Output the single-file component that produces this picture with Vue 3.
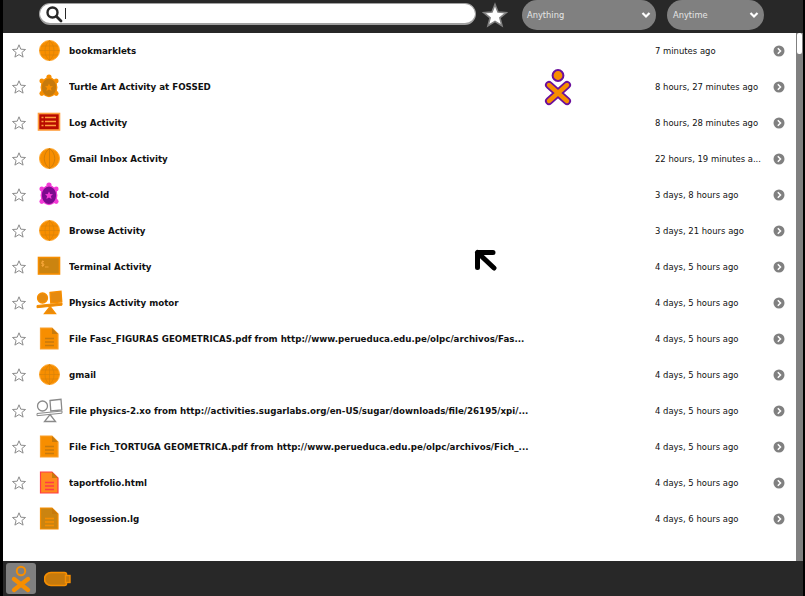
<script setup>
const rows = [
  { icon: 'globe', fill: '#f78e00', stroke: '#ffa62b', title: 'bookmarklets', time: '7 minutes ago' },
  { icon: 'turtle', fill: '#c77a0c', stroke: '#f78e00', title: 'Turtle Art Activity at FOSSED', time: '8 hours, 27 minutes ago' },
  { icon: 'log', fill: '#b80a00', stroke: '#ff9e3d', title: 'Log Activity', time: '8 hours, 28 minutes ago' },
  { icon: 'melon', fill: '#f78e00', stroke: '#c77a0c', title: 'Gmail Inbox Activity', time: '22 hours, 19 minutes a...' },
  { icon: 'turtle', fill: '#7b0a8e', stroke: '#f33ad6', title: 'hot-cold', time: '3 days, 8 hours ago' },
  { icon: 'globe', fill: '#f78e00', stroke: '#ffa62b', title: 'Browse Activity', time: '3 days, 21 hours ago' },
  { icon: 'terminal', fill: '#cb8410', stroke: '#f78e00', title: 'Terminal Activity', time: '4 days, 5 hours ago' },
  { icon: 'physics', fill: '#e58a0f', stroke: '#f78e00', title: 'Physics Activity motor', time: '4 days, 5 hours ago' },
  { icon: 'doc', fill: '#f78e00', stroke: '#f9a02c', line: '#c77a0c', title: 'File Fasc_FIGURAS GEOMETRICAS.pdf from http://www.perueduca.edu.pe/olpc/archivos/Fas...', time: '4 days, 5 hours ago' },
  { icon: 'globe', fill: '#f78e00', stroke: '#ffa62b', title: 'gmail', time: '4 days, 5 hours ago' },
  { icon: 'physics', fill: '#ffffff', stroke: '#8a8a8a', title: 'File physics-2.xo from http://activities.sugarlabs.org/en-US/sugar/downloads/file/26195/xpi/...', time: '4 days, 5 hours ago' },
  { icon: 'doc', fill: '#f78e00', stroke: '#f9a02c', line: '#c77a0c', title: 'File Fich_TORTUGA GEOMETRICA.pdf from http://www.perueduca.edu.pe/olpc/archivos/Fich_...', time: '4 days, 5 hours ago' },
  { icon: 'doc', fill: '#ff8a1e', stroke: '#ff3b47', line: '#ff3b47', title: 'taportfolio.html', time: '4 days, 5 hours ago' },
  { icon: 'doc', fill: '#cb8410', stroke: '#f78e00', line: '#f78e00', title: 'logosession.lg', time: '4 days, 6 hours ago' },
]
</script>

<template>
  <div class="journal">
    <header class="toolbar">
      <div class="search">
        <svg class="lens" width="18" height="18" viewBox="0 0 18 18">
          <circle cx="7.5" cy="7.5" r="5" fill="none" stroke="#282828" stroke-width="2.4" />
          <path d="M11.5 11.5L16 16" stroke="#282828" stroke-width="2.8" stroke-linecap="round" />
        </svg>
        <span class="caret"></span>
      </div>
      <svg class="fav" width="26" height="26" viewBox="0 0 26 26">
        <path d="M13 2.5l3 7.6 8.2.5-6.3 5.2 2.1 8-7-4.4-7 4.4 2.1-8-6.3-5.2 8.2-.5z" fill="#fff" stroke="#808080" stroke-width="1.6" />
      </svg>
      <div class="combo anything">
        <span>Anything</span>
        <svg width="10" height="8" viewBox="0 0 10 8"><path d="M1.5 2l3.5 3.5L8.5 2" fill="none" stroke="#fff" stroke-width="2.2" /></svg>
      </div>
      <div class="combo anytime">
        <span>Anytime</span>
        <svg width="10" height="8" viewBox="0 0 10 8"><path d="M1.5 2l3.5 3.5L8.5 2" fill="none" stroke="#fff" stroke-width="2.2" /></svg>
      </div>
    </header>

    <main class="middle">
      <div class="list">
        <div v-for="row in rows" :key="row.title" class="row">
          <svg class="star" width="16" height="16" viewBox="0 0 16 16">
            <path d="M8 1.8l1.8 4.4 4.7.3-3.6 3 1.2 4.6L8 11.6l-4.1 2.5 1.2-4.6-3.6-3 4.7-.3z" fill="#fff" stroke="#8c8c8c" stroke-width="1" />
          </svg>
          <svg class="icon" width="28" height="28" viewBox="0 0 28 28">
            <g v-if="row.icon === 'globe'">
              <circle cx="14.5" cy="13.5" r="10" :fill="row.fill" :stroke="row.stroke" stroke-width="1" />
              <path d="M4.5 13.5h20M6 9h17M6 18h17M14.5 3.5v20M14.5 3.5c-6 5-6 15 0 20M14.5 3.5c6 5 6 15 0 20" fill="none" stroke="#d98208" stroke-width="0.7" />
            </g>
            <g v-else-if="row.icon === 'melon'">
              <circle cx="14.5" cy="13.5" r="10" :fill="row.fill" stroke="#ffa62b" stroke-width="1" />
              <path d="M14.5 3.5v20M14.5 3.5c-7 5-7 15 0 20M14.5 3.5c7 5 7 15 0 20" fill="none" :stroke="row.stroke" stroke-width="0.8" />
            </g>
            <g v-else-if="row.icon === 'turtle'">
              <circle cx="14" cy="4" r="2.6" :fill="row.stroke" />
              <circle cx="6.8" cy="8" r="2.4" :fill="row.stroke" />
              <circle cx="21.2" cy="8" r="2.4" :fill="row.stroke" />
              <circle cx="6.8" cy="20.5" r="2.4" :fill="row.stroke" />
              <circle cx="21.2" cy="20.5" r="2.4" :fill="row.stroke" />
              <ellipse cx="14" cy="14.2" rx="7.8" ry="9.4" :fill="row.fill" :stroke="row.stroke" stroke-width="1.3" />
              <path d="M14 10.5l1.2 2.6 2.8.2-2.1 1.8.7 2.8-2.6-1.5-2.6 1.5.7-2.8-2.1-1.8 2.8-.2z" :fill="row.stroke" />
            </g>
            <g v-else-if="row.icon === 'log'">
              <rect x="3.5" y="4.5" width="21" height="16.5" :fill="row.fill" :stroke="row.stroke" stroke-width="1.6" />
              <path d="M10 8.5h11M10 12.5h11M10 16.5h11M6.5 8.5h2M6.5 12.5h2M6.5 16.5h2" stroke="#ff9e3d" stroke-width="1.4" />
            </g>
            <g v-else-if="row.icon === 'terminal'">
              <rect x="3.5" y="4.5" width="21" height="16.5" :fill="row.fill" :stroke="row.stroke" stroke-width="1.6" />
              <path d="M6.5 12.5h2.5M9 8.5H7l-.5 2 2.5.5-.5 1.5M7.7 7.5v6.5M10 14h3.5" fill="none" stroke="#f7a63a" stroke-width="0.9" />
            </g>
            <g v-else-if="row.icon === 'physics'">
              <circle cx="7.5" cy="9" r="5" :fill="row.fill" :stroke="row.stroke" stroke-width="1.3" />
              <path d="M15 3.5l11-1.2.8 10.5-11 1.2z" :fill="row.fill" :stroke="row.stroke" stroke-width="1.3" />
              <path d="M2 16.5l25-2.5v2.2l-25 2.5z" :fill="row.fill" :stroke="row.stroke" stroke-width="1" />
              <path d="M15 17.5l5.5 7H9.5z" :fill="row.fill" :stroke="row.stroke" stroke-width="1.3" />
            </g>
            <g v-else>
              <path d="M5.5 3h11.5l6 6v15H5.5z" :fill="row.fill" :stroke="row.stroke" stroke-width="1.2" />
              <path d="M17 3v6h6z" fill="#c77a0c" />
              <path d="M10 13.5h9M10 17h9M10 20.5h9" :stroke="row.line" stroke-width="1.4" />
            </g>
          </svg>
          <span class="title">{{ row.title }}</span>
          <span class="time">{{ row.time }}</span>
          <svg class="go" width="12" height="12" viewBox="0 0 12 12">
            <circle cx="6" cy="6" r="5.5" fill="#808080" />
            <path d="M4.8 3.3L7.5 6 4.8 8.7" fill="none" stroke="#fff" stroke-width="1.5" />
          </svg>
        </div>
      </div>
      <div class="scrollbar"><div class="thumb"></div></div>

      <svg class="xo-pointer" width="28" height="38" viewBox="0 0 28 38">
        <path d="M5 17l18 16M23 17L5 33" stroke="#6a0f9c" stroke-width="8" stroke-linecap="round" />
        <path d="M5 17l18 16M23 17L5 33" stroke="#f78e00" stroke-width="4.4" stroke-linecap="round" />
        <circle cx="14" cy="7.5" r="5.4" fill="#f78e00" stroke="#6a0f9c" stroke-width="2" />
      </svg>
      <svg class="cursor" width="24" height="24" viewBox="0 0 24 24">
        <path d="M4.5 4.5H20M4.5 4.5V19.5M4.5 4.5L21 20" fill="none" stroke="#000" stroke-width="5" stroke-linecap="round" />
      </svg>
    </main>

    <footer class="frame">
      <div class="device active">
        <svg width="28" height="30" viewBox="0 0 28 30">
          <path d="M7 15l14 11M21 15L7 26" stroke="#f78e00" stroke-width="4.4" stroke-linecap="round" />
          <circle cx="14" cy="7" r="4.2" fill="none" stroke="#f78e00" stroke-width="2" />
        </svg>
      </div>
      <svg class="usb" width="28" height="16" viewBox="0 0 28 16">
        <path d="M7 1.5h13.5a2 2 0 0 1 2 2v9a2 2 0 0 1-2 2H7a6.5 6.5 0 0 1 0-13z" fill="#c77a0c" stroke="#f78e00" stroke-width="1.6" />
        <rect x="21.5" y="4.5" width="4.5" height="7" fill="#c77a0c" stroke="#f78e00" stroke-width="1.4" />
      </svg>
    </footer>
  </div>
</template>

<style scoped>
.journal {
  width: 805px;
  height: 596px;
  box-sizing: border-box;
  padding: 0 2px 0 3px;
  display: flex;
  flex-direction: column;
  overflow: hidden;
  background: #000;
  font-family: "DejaVu Sans", sans-serif;
}
.toolbar {
  height: 33px;
  flex: none;
  display: flex;
  align-items: flex-start;
  padding-left: 36px;
  box-sizing: border-box;
  background: #282828;
}
.search {
  width: 437px;
  height: 22px;
  margin-top: 3px;
  box-sizing: border-box;
  display: flex;
  align-items: center;
  gap: 2px;
  padding-left: 5px;
  border-radius: 11px;
  background: #fff;
  border: 1px solid #a0a0a0;
  border-bottom-width: 2px;
}
.lens { flex: none; }
.caret {
  width: 1px;
  height: 11px;
  background: #282828;
}
.fav { margin: 2px 0 0 6px; }
.combo {
  height: 30px;
  margin: 0 0 0 14px;
  box-sizing: border-box;
  display: flex;
  align-items: center;
  justify-content: space-between;
  padding: 0 5px 0 5px;
  border-radius: 15px;
  background: #808080;
  color: #e6e6e6;
  font-size: 8.3px;
}
.combo svg { flex: none; }
.anything { width: 134px; }
.anytime { width: 97px; margin-left: 11px; padding-left: 6px; }
.middle {
  position: relative;
  flex: 1;
  min-height: 0;
  display: flex;
  background: #000;
}
.list {
  flex: 1;
  min-width: 0;
  background: #fff;
}
.row {
  height: 36px;
  display: flex;
  align-items: center;
  color: #111;
}
.star { flex: none; margin-left: 8px; }
.icon { flex: none; margin-left: 8px; }
.title {
  width: 586px;
  flex: none;
  margin-left: 6px;
  padding-bottom: 1px;
  font-size: 8.7px;
  font-weight: 700;
  white-space: nowrap;
  overflow: hidden;
}
.time {
  width: 118px;
  flex: none;
  padding-bottom: 1px;
  font-size: 8.45px;
  white-space: nowrap;
  overflow: hidden;
}
.go { flex: none; }
.scrollbar {
  width: 7px;
  flex: none;
  background: #808080;
}
.thumb {
  width: 5px;
  height: 21px;
  margin: 0 auto;
  border-radius: 2px;
  background: #fff;
}
.xo-pointer {
  position: absolute;
  left: 541px;
  top: 35px;
}
.cursor {
  position: absolute;
  left: 470px;
  top: 215px;
}
.frame {
  height: 35px;
  flex: none;
  display: flex;
  align-items: center;
  padding-left: 3px;
  background: #282828;
}
.device {
  width: 30px;
  height: 31px;
  display: flex;
  align-items: center;
  justify-content: center;
  border-radius: 3px;
}
.device.active { background: #808080; }
.usb { margin-left: 8px; }
</style>
